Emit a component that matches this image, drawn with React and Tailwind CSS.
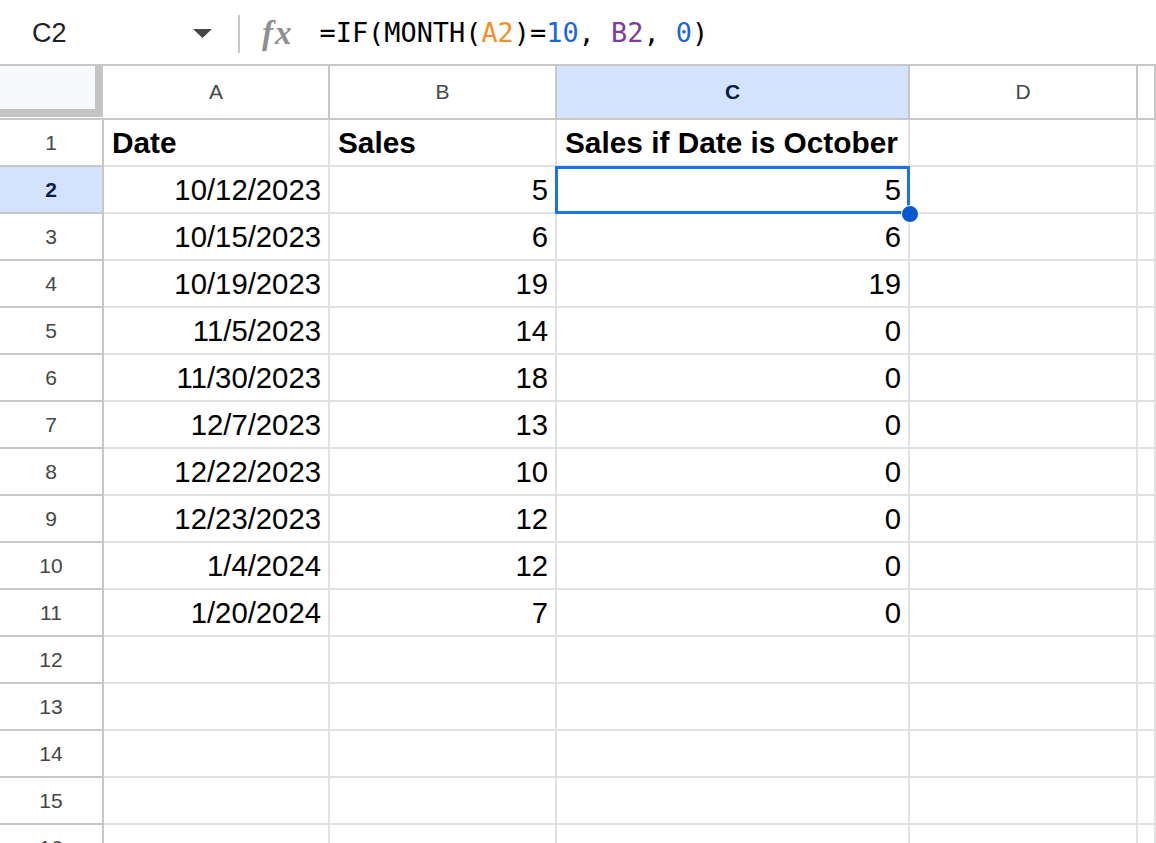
import React from 'react'

const ROWS = [
  ['10/12/2023', 5, 5],
  ['10/15/2023', 6, 6],
  ['10/19/2023', 19, 19],
  ['11/5/2023', 14, 0],
  ['11/30/2023', 18, 0],
  ['12/7/2023', 13, 0],
  ['12/22/2023', 10, 0],
  ['12/23/2023', 12, 0],
  ['1/4/2024', 12, 0],
  ['1/20/2024', 7, 0],
]

const COLS = ['A', 'B', 'C', 'D', '']

function HeaderCell({ label, selected }) {
  return (
    <div
      className={`flex items-center justify-center border-b-2 border-r-2 border-[#c7c7c7] text-[21px] ${
        selected ? 'bg-[#d3e3fd] font-bold text-[#041e49]' : 'text-[#444746]'
      }`}
    >
      {label}
    </div>
  )
}

function RowHeader({ n, selected }) {
  return (
    <div
      className={`flex h-[47px] items-center justify-center border-b-2 border-r-2 border-[#c7c7c7] text-[21px] ${
        selected ? 'bg-[#d3e3fd] font-bold text-[#041e49]' : 'text-[#444746]'
      }`}
    >
      {n}
    </div>
  )
}

function Cell({ children, right, bold }) {
  return (
    <div
      className={`flex h-[47px] items-center overflow-hidden whitespace-nowrap border-b-2 border-r-2 border-[#e1e1e1] text-black ${
        right ? 'justify-end pr-[7px]' : 'pl-[8px]'
      } ${bold ? 'pt-[2px] text-[29.8px] font-bold' : 'text-[29.3px]'}`}
    >
      {children}
    </div>
  )
}

export default function App() {
  const body = []
  // row 1: column titles
  body.push(
    <React.Fragment key="r1">
      <RowHeader n={1} />
      <Cell bold>Date</Cell>
      <Cell bold>Sales</Cell>
      <Cell bold>Sales if Date is October</Cell>
      <Cell />
      <Cell />
    </React.Fragment>
  )
  ROWS.forEach((r, i) => {
    body.push(
      <React.Fragment key={i}>
        <RowHeader n={i + 2} selected={i === 0} />
        <Cell right>{r[0]}</Cell>
        <Cell right>{r[1]}</Cell>
        <Cell right>{r[2]}</Cell>
        <Cell />
        <Cell />
      </React.Fragment>
    )
  })
  for (let n = 12; n <= 16; n++) {
    body.push(
      <React.Fragment key={n}>
        <RowHeader n={n} />
        <Cell />
        <Cell />
        <Cell />
        <Cell />
        <Cell />
      </React.Fragment>
    )
  }

  return (
    <div className="h-[843px] w-[1156px] overflow-hidden bg-white font-['Liberation_Sans',Arial,sans-serif]">
      {/* formula bar */}
      <div className="flex h-[64px] items-center">
        <div className="flex w-[238px] items-center justify-between pl-[32px] pr-[26px] pt-[2px]">
          <span className="text-[27px] leading-none text-[#1f1f1f]">C2</span>
          <svg width="19" height="9" viewBox="0 0 19 9">
            <path d="M0 0 L19 0 L9.5 9 Z" fill="#444746" />
          </svg>
        </div>
        <div className="mt-[4px] h-[38px] w-[2px] bg-[#c7c7c7]" />
        <span className="ml-[22px] pt-[2px] font-['Liberation_Serif',serif] text-[33px] font-bold italic leading-none tracking-[2px] text-[#8f8f8f]">
          fx
        </span>
        <span className="ml-[26px] pt-[2px] whitespace-pre font-['DejaVu_Sans_Mono',monospace] text-[26.9px] leading-none text-black">
          =IF(MONTH(<span className="text-[#f4902c]">A2</span>)=<span className="text-[#1a66d6]">10</span>,{' '}
          <span className="text-[#7d3c98]">B2</span>, <span className="text-[#1a66d6]">0</span>)
        </span>
      </div>

      {/* grid */}
      <div className="relative border-t-2 border-[#c7c7c7]">
        <div className="grid grid-cols-[104px_226px_227px_353px_228px_1fr]">
          <div className="h-[54px] border-b-2 border-[#c7c7c7]">
            <div className="h-[51px] w-[103px] border-b-[8px] border-r-[8px] border-[#c4c4c4] bg-[#f8f9fa]" />
          </div>
          {COLS.map(c => (
            <HeaderCell key={c || 'e'} label={c} selected={c === 'C'} />
          ))}
          {body}
        </div>

        {/* selection on C2 */}
        <div className="pointer-events-none absolute left-[555px] top-[100px] h-[48px] w-[355px] border-[3px] border-[#1a73e8]" />
        <div className="absolute left-[901px] top-[139px] h-[18px] w-[18px] rounded-full border border-white bg-[#0b57d0]" />
      </div>
    </div>
  )
}
